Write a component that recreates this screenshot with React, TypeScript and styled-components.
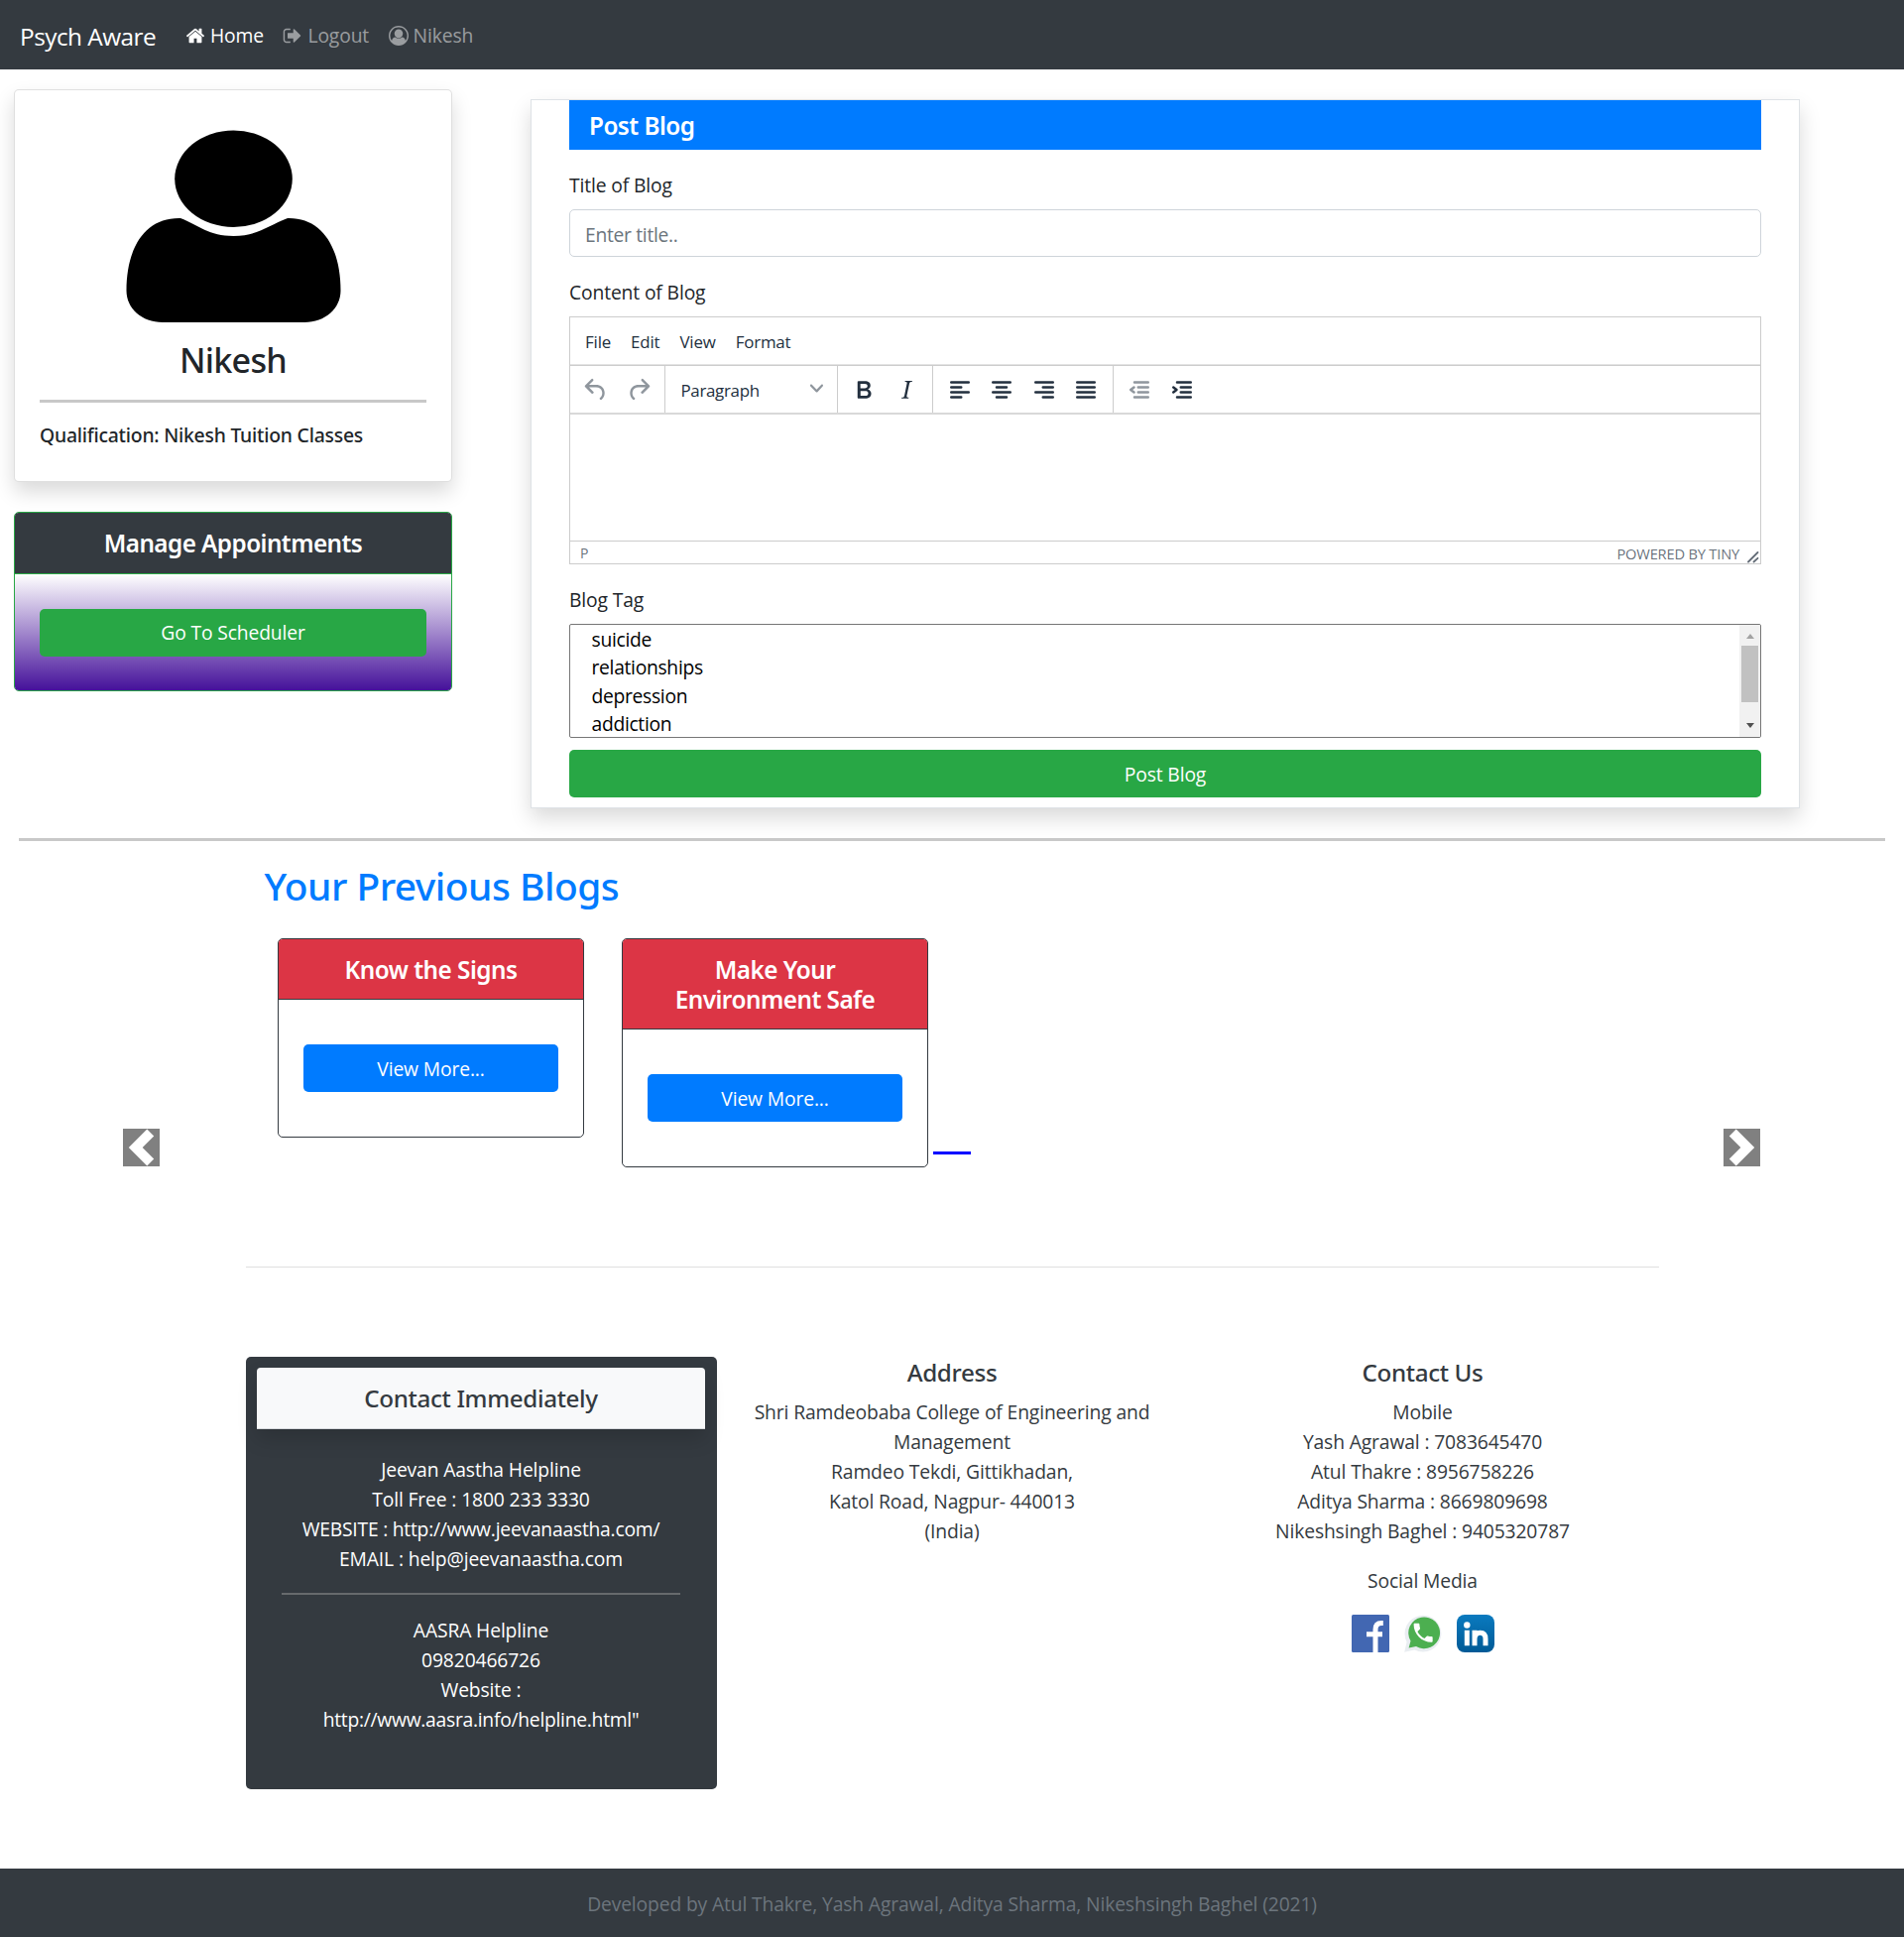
import React from "react";
import styled, { createGlobalStyle } from "styled-components";

const GlobalStyle = createGlobalStyle`
  *, *::before, *::after { box-sizing: border-box; }
  body {
    margin: 0;
    background: #fff;
    color: #212529;
    font: 400 19.3px/30px "Open Sans", "Noto Sans", sans-serif;
    letter-spacing: -0.007em;
  }
  h1, h2, h3, h4, h5, h6, p { margin: 0; }
`;

const headingFont = `"Noto Sans", "Open Sans", sans-serif`;

/* ---------- navigation ---------- */

const Navbar = styled.nav`
  display: flex;
  align-items: center;
  height: 70px;
  padding: 0 20px;
  background: #343a40;
`;

const Brand = styled.a`
  width: 167px;
  padding-top: 3px;
  color: #fff;
  font-size: 24.4px;
  letter-spacing: -0.022em;
`;

const NavLink = styled.a<{ $active?: boolean }>`
  display: flex;
  align-items: center;
  gap: 5px;
  margin-right: 19.5px;
  padding-top: 2px;
  color: ${(p) => (p.$active ? "#fff" : "rgba(255, 255, 255, 0.5)")};
  svg {
    width: 20px;
    height: 20px;
    fill: currentColor;
  }
`;

/* ---------- profile column ---------- */

const Main = styled.main`
  display: flex;
  align-items: flex-start;
  padding-left: 14px;
`;

const Sidebar = styled.aside`
  width: 442px;
  margin-top: 20px;
`;

const ProfileCard = styled.section`
  height: 396px;
  padding: 25px;
  border: 1px solid rgba(0, 0, 0, 0.125);
  border-radius: 5px;
  background: #fff;
  box-shadow: 0 10px 20px rgba(0, 0, 0, 0.15);
`;

const Avatar = styled.svg`
  display: block;
  width: 390px;
  height: 226px;
`;

const ProfileName = styled.h3`
  height: 41px;
  font: 500 34.2px/42px ${headingFont};
  letter-spacing: -0.022em;
  text-align: center;
`;

const ThickRule = styled.div`
  height: 3px;
  margin: 20px 0 21px;
  background: #c8c8c8;
`;

const Qualification = styled.h6`
  font: 500 19.4px/24px ${headingFont};
  letter-spacing: -0.012em;
`;

const AppointmentCard = styled.section`
  margin-top: 30px;
  border: 1px solid #28a745;
  border-radius: 5px;
  overflow: hidden;
`;

const AppointmentTitle = styled.h5`
  padding: 15px;
  border-bottom: 1px solid #28a745;
  background: #343a40;
  color: #fff;
  font: 600 24.3px/31px ${headingFont};
  letter-spacing: -0.023em;
  text-align: center;
`;

const AppointmentBody = styled.div`
  padding: 35px 25px 34px;
  background: linear-gradient(#fff, #45119a);
`;

const Button = styled.button<{ $color: string; $height?: number }>`
  display: block;
  width: 100%;
  height: ${(p) => p.$height ?? 48}px;
  padding: ${(p) => (p.$height ? 0 : 2)}px 0 0;
  border: 0;
  border-radius: 5px;
  background: ${(p) => p.$color};
  color: #fff;
  font: inherit;
  letter-spacing: inherit;
`;

/* ---------- blog form ---------- */

const BlogForm = styled.form`
  width: 1280px;
  height: 715px;
  margin: 30px 0 0 79px;
  padding: 0 38px;
  border: 1px solid #dee2e6;
  background: #fff;
  box-shadow: 0 10px 20px rgba(0, 0, 0, 0.15);
`;

const FormTitle = styled.h5`
  padding: 11px 20px 9px;
  background: #007bff;
  color: #fff;
  font: 600 24.3px/30px ${headingFont};
  letter-spacing: -0.022em;
`;

const Label = styled.label`
  display: block;
  margin: 21px 0 9px;
`;

const TitleInput = styled.input`
  display: block;
  width: 100%;
  height: 48px;
  padding: 2px 15px 0;
  border: 1px solid #ced4da;
  border-radius: 5px;
  font: inherit;
  letter-spacing: -0.016em;
  &::placeholder {
    color: #6c757d;
    opacity: 1;
  }
`;

const Editor = styled.div`
  display: flex;
  flex-direction: column;
  height: 250px;
  border: 1px solid #ccc;
  color: #222f3e;
`;

const MenuBar = styled.div`
  display: flex;
  align-items: center;
  gap: 20px;
  height: 48px;
  padding: 3px 15px 0;
  border-bottom: 1px solid #e3e3e3;
  font-size: 16.9px;
  letter-spacing: -0.01em;
`;

const ToolBar = styled.div`
  display: flex;
  height: 50px;
  border-top: 1px solid #ccc;
  border-bottom: 2px solid #d9d9d9;
`;

const ToolGroup = styled.div`
  display: flex;
  align-items: center;
  padding: 0 5px;
  & + & {
    border-left: 1px solid #ccc;
  }
  &:nth-child(n + 4) {
    padding: 0 5px 0 5.5px;
  }
`;

const ToolButton = styled.span<{ $disabled?: boolean }>`
  display: flex;
  justify-content: center;
  width: 42.5px;
  color: #222f3e;
  opacity: ${(p) => (p.$disabled ? 0.5 : 1)};
  svg {
    width: 30px;
    height: 30px;
  }
`;

const FormatSelect = styled.span`
  display: flex;
  align-items: center;
  justify-content: space-between;
  width: 163px;
  padding: 2px 9px 0 10.5px;
  font-size: 16.9px;
  letter-spacing: -0.018em;
  svg {
    width: 13px;
    height: 13px;
    margin-bottom: 4px;
    opacity: 0.5;
  }
`;

const WritingArea = styled.div`
  flex: 1;
`;

const StatusBar = styled.div`
  display: flex;
  align-items: center;
  height: 23px;
  padding: 1px 1px 0 10px;
  border-top: 1px solid #ccc;
  color: rgba(34, 47, 62, 0.7);
  font-size: 14.7px;
  line-height: 20px;
  letter-spacing: -0.014em;
  svg {
    width: 12px;
    height: 12px;
    margin: 8px 0 0 8px;
  }
`;

const StatusPath = styled.span`
  flex: 1;
  font-size: 14px;
`;

const TagList = styled.div`
  display: flex;
  justify-content: space-between;
  height: 115px;
  margin-bottom: 12px;
  border: 1px solid #767676;
  border-radius: 2px;
  color: #000;
  line-height: 28.4px;
  letter-spacing: -0.016em;
  overflow: hidden;
`;

const Options = styled.div`
  padding: 1px 21.5px 0;
`;

const Scrollbar = styled.div`
  display: flex;
  flex-direction: column;
  align-items: center;
  justify-content: space-between;
  width: 21px;
  background: #f1f1f1;
`;

const ScrollArrow = styled.span<{ $down?: boolean }>`
  height: 5px;
  margin: ${(p) => (p.$down ? "0 0 9px" : "9px 0 0")};
  border: 0 solid transparent;
  border-width: 0 4.5px;
  ${(p) => (p.$down ? "border-top: 5px solid #505050" : "border-bottom: 5px solid #a3a3a3")};
`;

const ScrollThumb = styled.span`
  width: 17px;
  height: 57px;
  margin: 7px 0 21px;
  background: #c1c1c1;
`;

/* ---------- previous blogs ---------- */

const SectionRule = styled.div`
  height: 3px;
  margin: 30px 19px 20px;
  background: #c8c8c8;
`;

const Carousel = styled.section`
  display: grid;
  grid-template-columns: 248px 1425px 247px;
  height: 410px;
`;

const SlideControl = styled.button<{ $side: "prev" | "next" }>`
  width: 37px;
  height: 38px;
  margin: ${(p) => (p.$side === "prev" ? "270px 0 0 124px" : "270px 0 0 65px")};
  padding: 0;
  border: 0;
  background: #808080;
  svg {
    display: block;
    width: 100%;
    height: 100%;
    fill: #fff;
  }
`;

const Slide = styled.div`
  border-bottom: 1px solid #dfdfdf;
`;

const SlideTitle = styled.h2`
  padding: 2px 0 0 18.5px;
  color: #007bff;
  font: 500 38.9px/46px ${headingFont};
  letter-spacing: -0.013em;
`;

const BlogRow = styled.div`
  display: flex;
  align-items: flex-start;
  padding: 30px 0 0 32px;
`;

const BlogCard = styled.article`
  width: 309px;
  margin-right: 38px;
  border: 1px solid #343a40;
  border-radius: 5px;
  overflow: hidden;
  &:nth-of-type(2) {
    margin-right: 5px;
  }
`;

const BlogTitle = styled.h5`
  padding: 16px 25px 14px;
  border-bottom: 1px solid #343a40;
  background: #dc3545;
  color: #fff;
  font: 600 24.3px/30px ${headingFont};
  letter-spacing: -0.021em;
  text-align: center;
`;

const BlogBody = styled.div`
  padding: 45px 25px;
`;

const BlueDash = styled.span`
  width: 38px;
  height: 3px;
  margin-top: 215px;
  background: #00f;
`;

/* ---------- contact ---------- */

const ContactRow = styled.section`
  display: grid;
  grid-template-columns: 475px 474px 475px;
  align-items: start;
  margin: 90px 0 80px 248px;
  color: #343a40;
  text-align: center;
`;

const HelplineCard = styled.div`
  height: 436px;
  padding: 11px 12px 11px 11px;
  border-radius: 5px;
  background: #343a40;
  color: #fff;
`;

const HelplineTitle = styled.h5`
  height: 62px;
  padding: 16px 15px 14px;
  border-bottom: 1px solid #d5d8db;
  border-radius: 4px 4px 0 0;
  background: #f8f9fa;
  box-shadow: 0 10px 20px rgba(0, 0, 0, 0.15);
  color: #343a40;
  font: 500 24.2px/30px ${headingFont};
  letter-spacing: -0.014em;
`;

const HelplineBody = styled.div`
  padding: 26px 25px;
`;

const HelplineRule = styled.div`
  height: 2px;
  margin: 19px 0 21px;
  background: #676a6d;
`;

const ContactTitle = styled.h5`
  padding-top: 1px;
  margin-bottom: 10px;
  font: 500 24.2px/30px ${headingFont};
  letter-spacing: -0.014em;
`;

const Line = styled.p<{ $track?: number }>`
  letter-spacing: ${(p) => p.$track ?? -0.007}em;
`;

const SocialLabel = styled.p`
  margin: 20px 0 19px;
`;

const SocialIcons = styled.div`
  display: flex;
  justify-content: center;
  gap: 15px;
  svg {
    width: 38px;
    height: 38px;
  }
`;

const Footer = styled.footer`
  height: 70px;
  padding: 21px 20px 19px;
  background: #343a40;
  color: #6c757d;
  text-align: center;
`;

/* ---------- icons ---------- */

const HomeIcon = () => (
  <svg viewBox="0 0 1792 1792">
    <path d="M1472 992v480q0 26-19 45t-45 19h-384v-384h-256v384h-384q-26 0-45-19t-19-45v-480q0-1 .5-3t.5-3l575-474 575 474q1 2 1 6zm223-69l-62 74q-8 9-21 11h-3q-13 0-21-7l-692-577-692 577q-12 8-24 7-13-2-21-11l-62-74q-8-10-7-23.5t11-21.5l719-599q32-26 76-26t76 26l244 204v-195q0-14 9-23t23-9h192q14 0 23 9t9 23v408l219 182q10 8 11 21.5t-7 23.5z" />
  </svg>
);

const LogoutIcon = () => (
  <svg viewBox="0 0 1792 1792">
    <path d="M704 1440q0 4 1 20t.5 26.5-3 23.5-10 19.5-20.5 6.5h-320q-119 0-203.5-84.5t-84.5-203.5v-704q0-119 84.5-203.5t203.5-84.5h320q13 0 22.5 9.5t9.5 22.5q0 4 1 20t.5 26.5-3 23.5-10 19.5-20.5 6.5h-320q-66 0-113 47t-47 113v704q0 66 47 113t113 47h312l11.5 1 11.5 3 8 5.5 7 9 2 13.5zm928-544q0 26-19 45l-544 544q-19 19-45 19t-45-19-19-45v-288h-448q-26 0-45-19t-19-45v-384q0-26 19-45t45-19h448v-288q0-26 19-45t45-19 45 19l544 544q19 19 19 45z" />
  </svg>
);

const UserIcon = () => (
  <svg viewBox="0 0 1792 1792">
    <path d="M896 0q182 0 348 71t286 191 191 286 71 348q0 181-70.5 347t-190.5 286-286 191.5-349 71.5-349-71-285.5-191.5-190.5-286-71-347.5 71-348 191-286 286-191 348-71zm619 1351q149-205 149-455 0-156-61-298t-164-245-245-164-298-61-298 61-245 164-164 245-61 298q0 250 149 455 66-327 306-327 131 128 313 128t313-128q240 0 306 327zm-235-647q0-159-112.5-271.5t-271.5-112.5-271.5 112.5-112.5 271.5 112.5 271.5 271.5 112.5 271.5-112.5 112.5-271.5z" />
  </svg>
);

const undoPath =
  "M6.4 8H12c3.7 0 6.2 2 6.8 5.1.6 2.7-.4 5.6-2.3 6.8a1 1 0 01-1-1.8c1.1-.6 1.8-2.7 1.4-4.6-.5-2.1-2.1-3.5-4.9-3.5H6.4l3.3 3.3a1 1 0 11-1.4 1.4l-5-5a1 1 0 010-1.4l5-5a1 1 0 011.4 1.4L6.4 8z";

const UndoIcon = ({ flip }: { flip?: boolean }) => (
  <svg viewBox="0 0 24 24" fill="currentColor">
    <path d={undoPath} transform={flip ? "matrix(-1 0 0 1 24 0)" : undefined} />
  </svg>
);

const BoldIcon = () => (
  <svg viewBox="0 0 24 24" fill="currentColor" fillRule="evenodd">
    <path d="M7.8 19c-.3 0-.5 0-.6-.2l-.2-.5V5.7c0-.2 0-.4.2-.5l.6-.2h5c1.5 0 2.7.3 3.5 1 .7.6 1.1 1.4 1.1 2.5a3 3 0 01-.6 1.9c-.4.6-1 1-1.6 1.2.4.1.9.3 1.3.6s.8.7 1 1.2c.4.4.5 1 .5 1.6 0 1.3-.4 2.3-1.3 3-.8.7-2.1 1-3.8 1H7.8zm5-8.3c.6 0 1.2-.1 1.6-.5.4-.3.6-.7.6-1.3 0-1.1-.8-1.7-2.3-1.7H9.3v3.5h3.4zm.5 6c.7 0 1.3-.1 1.7-.4.4-.4.6-.9.6-1.5s-.2-1-.7-1.4c-.4-.3-1-.4-2-.4H9.4v3.8h4z" />
  </svg>
);

const ItalicIcon = () => (
  <svg viewBox="0 0 24 24" fill="currentColor">
    <path d="M16.7 4.7l-.1.9h-.3c-.6 0-1 0-1.4.3-.3.3-.4.6-.5 1.1l-2.1 9.8v.6c0 .5.4.8 1.4.8h.2l-.2.8H8l.2-.8h.2c1.1 0 1.8-.5 2-1.5l2-9.8.1-.5c0-.6-.4-.8-1.4-.8h-.3l.2-.9h5.8z" />
  </svg>
);

const LinesIcon = ({ d }: { d: string }) => (
  <svg viewBox="0 0 24 24" fill="none" stroke="currentColor" strokeWidth="2" strokeLinecap="round" strokeLinejoin="round">
    <path d={d} />
  </svg>
);

const alignIcons = [
  "M5 6h14M5 10h8M5 14h14M5 18h8",
  "M5 6h14M8 10h8M5 14h14M8 18h8",
  "M5 6h14M11 10h8M5 14h14M11 18h8",
  "M5 6h14M5 10h14M5 14h14M5 18h14",
];

const FacebookIcon = () => (
  <svg viewBox="0 0 38 38">
    <rect width="38" height="38" rx="1.5" fill="#4267b2" />
    <path d="M24 38V15Q24 8.6 30 8.6H31.8M15 19.8H31" fill="none" stroke="#fff" strokeWidth="5" />
  </svg>
);

const WhatsAppIcon = () => (
  <svg viewBox="0 0 38 38">
    <path d="M0.2 37.8L2.6 27.5A18.4 18.4 0 1 1 10.5 35.4Z" fill="#e9edf1" />
    <path d="M4.6 33.4L6.5 26.5A15.9 15.9 0 1 1 12 32Z" fill="#4caf50" />
    <path
      transform="translate(6.4 5.6) scale(1.06)"
      d="M6.62 10.79c1.44 2.83 3.76 5.14 6.59 6.59l2.2-2.2c.27-.27.67-.36 1.02-.24 1.12.37 2.33.57 3.57.57.55 0 1 .45 1 1V20c0 .55-.45 1-1 1-9.39 0-17-7.61-17-17 0-.55.45-1 1-1h3.5c.55 0 1 .45 1 1 0 1.25.2 2.45.57 3.57.11.35.03.74-.25 1.02l-2.2 2.2z"
      fill="#fff"
    />
  </svg>
);

const LinkedInIcon = () => (
  <svg viewBox="0 0 38 38">
    <defs>
      <linearGradient id="linkedin" x1="0" y1="0" x2="0" y2="1">
        <stop offset="0" stopColor="#0a7abf" />
        <stop offset="1" stopColor="#005a96" />
      </linearGradient>
    </defs>
    <rect width="38" height="38" rx="8" fill="url(#linkedin)" />
    <circle cx="10.3" cy="10.5" r="3.2" fill="#fff" />
    <path
      d="M10.3 15.7V31.2M18 31.2V15.7M18 25Q18 18.3 23.6 18.3Q29 18.3 29 24.5V31.2"
      fill="none"
      stroke="#fff"
      strokeWidth="5"
    />
  </svg>
);

/* ---------- data ---------- */

const tags = ["suicide", "relationships", "depression", "addiction"];
const blogs = ["Know the Signs", "Make Your Environment Safe"];
const address = [
  "Shri Ramdeobaba College of Engineering and",
  "Management",
  "Ramdeo Tekdi, Gittikhadan,",
  "Katol Road, Nagpur- 440013",
  "(India)",
];
const contacts = [
  "Mobile",
  "Yash Agrawal : 7083645470",
  "Atul Thakre : 8956758226",
  "Aditya Sharma : 8669809698",
  "Nikeshsingh Baghel : 9405320787",
];

export default function App() {
  return (
    <>
      <GlobalStyle />
      <Navbar>
        <Brand>Psych Aware</Brand>
        <NavLink $active><HomeIcon />Home</NavLink>
        <NavLink><LogoutIcon />Logout</NavLink>
        <NavLink><UserIcon />Nikesh</NavLink>
      </Navbar>

      <Main>
        <Sidebar>
          <ProfileCard>
            <Avatar viewBox="40 116 390 226">
              <ellipse cx="235.5" cy="180.3" rx="59.3" ry="48.7" />
              <path d="M182 220C200 227 211 238 235.5 238C260 238 271 227 290 220C325 219 343.5 250 343.5 293C343.5 311 328 325 307 325H164C143 325 127.5 311 127.5 293C127.5 250 146 219 182 220Z" />
            </Avatar>
            <ProfileName>Nikesh</ProfileName>
            <ThickRule />
            <Qualification>Qualification: Nikesh Tuition Classes</Qualification>
          </ProfileCard>
          <AppointmentCard>
            <AppointmentTitle>Manage Appointments</AppointmentTitle>
            <AppointmentBody>
              <Button $color="#28a745" $height={48}>Go To Scheduler</Button>
            </AppointmentBody>
          </AppointmentCard>
        </Sidebar>

        <BlogForm>
          <FormTitle>Post Blog</FormTitle>
          <Label>Title of Blog</Label>
          <TitleInput placeholder="Enter title.." />
          <Label>Content of Blog</Label>
          <Editor>
            <MenuBar>
              <span>File</span>
              <span>Edit</span>
              <span>View</span>
              <span>Format</span>
            </MenuBar>
            <ToolBar>
              <ToolGroup>
                <ToolButton $disabled><UndoIcon /></ToolButton>
                <ToolButton $disabled><UndoIcon flip /></ToolButton>
              </ToolGroup>
              <ToolGroup>
                <FormatSelect>
                  Paragraph
                  <svg viewBox="0 0 10 10" fill="currentColor">
                    <path d="M8.7 2.2c.3-.3.8-.3 1 0 .4.4.4.9 0 1.2L5.7 7.8c-.3.3-.9.3-1.2 0L.2 3.4a.8.8 0 010-1.2c.3-.3.8-.3 1.1 0L5 6l3.7-3.8z" />
                  </svg>
                </FormatSelect>
              </ToolGroup>
              <ToolGroup>
                <ToolButton><BoldIcon /></ToolButton>
                <ToolButton><ItalicIcon /></ToolButton>
              </ToolGroup>
              <ToolGroup>
                {alignIcons.map((d) => (
                  <ToolButton key={d}><LinesIcon d={d} /></ToolButton>
                ))}
              </ToolGroup>
              <ToolGroup>
                <ToolButton $disabled><LinesIcon d="M8 6h11M11 10h8M11 14h8M8 18h11M7.6 10L5 12l2.6 2" /></ToolButton>
                <ToolButton><LinesIcon d="M8 6h11M11 10h8M11 14h8M8 18h11M5 10l2.6 2L5 14" /></ToolButton>
              </ToolGroup>
            </ToolBar>
            <WritingArea />
            <StatusBar>
              <StatusPath>P</StatusPath>
              POWERED BY TINY
              <svg viewBox="0 0 12 12" stroke="currentColor" strokeWidth="1.8" strokeLinecap="round">
                <path d="M1 10.5L10.5 1M6.5 10.5L10.5 6.8" />
              </svg>
            </StatusBar>
          </Editor>
          <Label>Blog Tag</Label>
          <TagList>
            <Options>
              {tags.map((t) => <div key={t}>{t}</div>)}
            </Options>
            <Scrollbar>
              <ScrollArrow />
              <ScrollThumb />
              <ScrollArrow $down />
            </Scrollbar>
          </TagList>
          <Button type="button" $color="#28a745">Post Blog</Button>
        </BlogForm>
      </Main>

      <SectionRule />

      <Carousel>
        <SlideControl $side="prev">
          <svg viewBox="0 0 8 8"><path d="M5.25 0l-4 4 4 4 1.5-1.5L4.25 4l2.5-2.5L5.25 0z" /></svg>
        </SlideControl>
        <Slide>
          <SlideTitle>Your Previous Blogs</SlideTitle>
          <BlogRow>
            {blogs.map((b) => (
              <BlogCard key={b}>
                <BlogTitle>{b}</BlogTitle>
                <BlogBody>
                  <Button $color="#007bff">View More...</Button>
                </BlogBody>
              </BlogCard>
            ))}
            <BlueDash />
          </BlogRow>
        </Slide>
        <SlideControl $side="next">
          <svg viewBox="0 0 8 8"><path d="M2.75 0l-1.5 1.5L3.75 4l-2.5 2.5L2.75 8l4-4-4-4z" /></svg>
        </SlideControl>
      </Carousel>

      <ContactRow>
        <HelplineCard>
          <HelplineTitle>Contact Immediately</HelplineTitle>
          <HelplineBody>
            <Line>Jeevan Aastha Helpline</Line>
            <Line>Toll Free : 1800 233 3330</Line>
            <Line $track={-0.012}>WEBSITE : http://www.jeevanaastha.com/</Line>
            <Line>EMAIL : help@jeevanaastha.com</Line>
            <HelplineRule />
            <Line>AASRA Helpline</Line>
            <Line>09820466726</Line>
            <Line>Website :</Line>
            <Line $track={-0.014}>http://www.aasra.info/helpline.html"</Line>
          </HelplineBody>
        </HelplineCard>
        <div>
          <ContactTitle>Address</ContactTitle>
          {address.map((l) => <Line key={l}>{l}</Line>)}
        </div>
        <div>
          <ContactTitle>Contact Us</ContactTitle>
          {contacts.map((l) => <Line key={l}>{l}</Line>)}
          <SocialLabel>Social Media</SocialLabel>
          <SocialIcons>
            <FacebookIcon />
            <WhatsAppIcon />
            <LinkedInIcon />
          </SocialIcons>
        </div>
      </ContactRow>

      <Footer>Developed by Atul Thakre, Yash Agrawal, Aditya Sharma, Nikeshsingh Baghel (2021)</Footer>
    </>
  );
}
